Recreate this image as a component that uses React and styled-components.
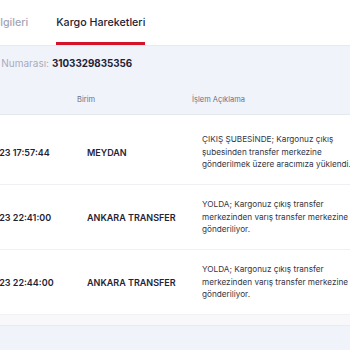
import React from "react";
import styled, { createGlobalStyle } from "styled-components";

const GlobalStyle = createGlobalStyle`
  html, body {
    margin: 0;
    padding: 0;
    background: #ffffff;
  }
  body {
    font-family: Inter, "Open Sans", "Liberation Sans", sans-serif;
    -webkit-font-smoothing: antialiased;
  }
`;

const tabs = [
  { id: "info", label: "Gönderi Bilgileri" },
  { id: "moves", label: "Kargo Hareketleri" },
];

const movements = [
  {
    date: "12.01.2023 17:57:44",
    unit: "MEYDAN",
    lines: [
      "ÇIKIŞ ŞUBESİNDE; Kargonuz çıkış",
      "şubesinden transfer merkezine",
      "gönderilmek üzere aracımıza yüklendi.",
    ],
  },
  {
    date: "12.01.2023 22:41:00",
    unit: "ANKARA TRANSFER",
    lines: [
      "YOLDA; Kargonuz çıkış transfer",
      "merkezinden varış transfer merkezine",
      "gönderiliyor.",
    ],
  },
  {
    date: "12.01.2023 22:44:00",
    unit: "ANKARA TRANSFER",
    lines: [
      "YOLDA; Kargonuz çıkış transfer",
      "merkezinden varış transfer merkezine",
      "gönderiliyor.",
    ],
  },
];

const App = () => {
  return (
    <Viewport>
      <GlobalStyle />
      <Page>
        <TabBar>
          {tabs.map((tab) => (
            <Tab key={tab.id} active={tab.id === "moves"}>
              {tab.label}
            </Tab>
          ))}
        </TabBar>

        <Panel>
          <TrackingRow>
            <span>Takip Numarası:</span>
            <strong>3103329835356</strong>
          </TrackingRow>

          <Grid>
            <HeadCell>İşlem Tarihi</HeadCell>
            <HeadCell>Birim</HeadCell>
            <HeadCell>İşlem Açıklama</HeadCell>
          </Grid>
        </Panel>

        <Body>
          {movements.map((m, i) => (
            <Row key={i} first={i === 0}>
              <Cell bold>{m.date}</Cell>
              <Cell bold>{m.unit}</Cell>
              <Cell>
                {m.lines.map((l) => (
                  <Line key={l}>{l}</Line>
                ))}
              </Cell>
            </Row>
          ))}
        </Body>
        <TableFoot />
        <Bottom />
      </Page>
    </Viewport>
  );
};
export default App;

const Viewport = styled.div`
  width: 350px;
  height: 350px;
  overflow: hidden;
  background: #f1f3fa;
`;

const Page = styled.div`
  width: 560px;
  margin-left: -59px;
`;

const TabBar = styled.div`
  display: flex;
  gap: 28px;
  height: 45px;
  padding-left: 6px;
  background: #ffffff;
  border-bottom: 1px solid #e7e9f1;
`;

const Tab = styled.div`
  box-sizing: border-box;
  height: 45px;
  display: flex;
  align-items: center;
  padding-top: 2px;
  font-size: 10.7px;
  font-weight: 500;
  color: ${(p) => (p.active ? "#1e2234" : "#a3a5b6")};
  border-bottom: 3px solid ${(p) => (p.active ? "#d4122a" : "transparent")};
`;

const Panel = styled.div`
  background: #f1f3fa;
  border-bottom: 1px solid #e6e8ef;
`;

const TrackingRow = styled.div`
  display: flex;
  align-items: baseline;
  gap: 3px;
  height: 35px;
  padding: 11px 0 0 32px;
  box-sizing: border-box;
  span {
    font-size: 10px;
    color: #a9abbb;
  }
  strong {
    font-size: 9.8px;
    font-weight: 700;
    color: #1e2234;
  }
`;

const Grid = styled.div`
  display: grid;
  grid-template-columns: 124px 115px 1fr;
  align-items: center;
`;

const HeadCell = styled.div`
  box-sizing: border-box;
  height: 33px;
  display: flex;
  align-items: center;
  padding: 3px 0 0 12px;
  font-size: 7.5px;
  color: #6d7082;
`;

const Body = styled.div`
  background: #ffffff;
  padding-top: 5px;
`;

const Row = styled(Grid)`
  box-sizing: border-box;
  height: ${(p) => (p.first ? "64px" : "65px")};
  border-top: ${(p) => (p.first ? "none" : "1px solid #eef0f4")};
`;

const Cell = styled.div`
  padding-left: 22px;
  font-size: ${(p) => (p.bold ? "9px" : "8.2px")};
  font-weight: ${(p) => (p.bold ? 600 : 400)};
  color: ${(p) => (p.bold ? "#1f2335" : "#333645")};
  white-space: nowrap;
`;

const Line = styled.div`
  line-height: 12.6px;
`;

const TableFoot = styled.div`
  height: 10px;
  background: #f8f8fa;
  border-top: 1px solid #f0f1f4;
  border-bottom: 1px solid #e9ebf2;
`;

const Bottom = styled.div`
  height: 40px;
  background: #f1f3fa;
`;
